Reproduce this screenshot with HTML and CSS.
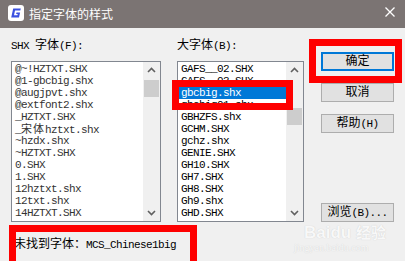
FILE: index.html
```html
<!DOCTYPE html>
<html lang="zh-CN">
  <head>
    <meta charset="UTF-8">
    <title>指定字体的样式</title>
    <link rel="stylesheet" href="styles.css">
  </head>
  <body>
    <div class="dialog">
      <div class="titlebar">
        <svg class="app-icon" width="16" height="16" viewBox="0 0 16 16">
          <rect x="0" y="0" width="16" height="16" rx="3" fill="#fff"/>
          <path d="M5.2 3.5 H12.8 L12.3 5.6 H7 L6 10.2 H9.4 L9.7 9 H8.1 L8.5 7.4 H12.1 L11 12.4 H3.2 Z" fill="#3b50e0"/>
        </svg>
        <span class="title">指定字体的样式</span>
        <svg class="close" width="10" height="10" viewBox="0 0 10 10">
          <path d="M0.5 0.5 L9.5 9.5 M9.5 0.5 L0.5 9.5" stroke="#fff" stroke-width="1.3"/>
        </svg>
      </div>

      <div class="content">
        <div class="col col-shx">
          <div class="label">SHX <span class="cjk">字体</span>(F):</div>
          <div class="listbox dim">
            <ul class="items">
              <li>@~!HZTXT.SHX</li>
              <li>@1-gbcbig.shx</li>
              <li>@augjpvt.shx</li>
              <li>@extfont2.shx</li>
              <li>_HZTXT.SHX</li>
              <li>_<span class="cjk">宋体</span>hztxt.shx</li>
              <li>~hzdx.shx</li>
              <li>~HZTXT.SHX</li>
              <li>0.SHX</li>
              <li>1.SHX</li>
              <li>12hztxt.shx</li>
              <li>12txt.shx</li>
              <li>14HZTXT.SHX</li>
            </ul>
            <div class="scrollbar">
              <svg class="arrow" width="17" height="17" viewBox="0 0 17 17"><path d="M5 10 L8.5 6.5 L12 10" fill="none" stroke="#606060" stroke-width="1.6"/></svg>
              <div class="thumb thumb-top"></div>
              <svg class="arrow arrow-down" width="17" height="17" viewBox="0 0 17 17"><path d="M5 7 L8.5 10.5 L12 7" fill="none" stroke="#606060" stroke-width="1.6"/></svg>
            </div>
          </div>
        </div>

        <div class="col col-big">
          <div class="label"><span class="cjk">大字体</span>(B):</div>
          <div class="listbox">
            <ul class="items">
              <li>GAFS__02.SHX</li>
              <li>GAFS__03.SHX</li>
              <li class="selected">gbcbig.shx</li>
              <li>gbcbig01.shx</li>
              <li>GBHZFS.shx</li>
              <li>GCHM.SHX</li>
              <li>gchz.shx</li>
              <li>GENIE.SHX</li>
              <li>GH10.SHX</li>
              <li>GH7.SHX</li>
              <li>GH8.SHX</li>
              <li>Gh9.shx</li>
              <li>GHD.SHX</li>
            </ul>
            <div class="scrollbar">
              <svg class="arrow" width="17" height="17" viewBox="0 0 17 17"><path d="M5 10 L8.5 6.5 L12 10" fill="none" stroke="#606060" stroke-width="1.6"/></svg>
              <div class="thumb thumb-mid"></div>
              <svg class="arrow arrow-down" width="17" height="17" viewBox="0 0 17 17"><path d="M5 7 L8.5 10.5 L12 7" fill="none" stroke="#606060" stroke-width="1.6"/></svg>
            </div>
          </div>
        </div>

        <div class="col col-buttons">
          <button class="btn btn-default"><span class="cjk">确定</span></button>
          <button class="btn"><span class="cjk">取消</span></button>
          <button class="btn"><span class="cjk">帮助</span>(H)</button>
          <button class="btn btn-browse"><span class="cjk">浏览</span>(B)...</button>
        </div>
      </div>

      <div class="status"><span class="cjk">未找到字体：</span>MCS_Chinese1big</div>

      <div class="mark mark-ok"></div>
      <div class="mark mark-sel"></div>
      <div class="mark mark-status"></div>

      <div class="watermark">
        <div class="wm-logo">Baidu <span class="cjk">经验</span></div>
        <div class="wm-url">jingyan.baidu.com</div>
      </div>
    </div>
  </body>
</html>
```

FILE: styles.css
```css
body {
  margin: 0;
  background-color: #f0f0f0;
  font-family: "Liberation Mono", "Noto Sans CJK SC", monospace;
  font-size: 11px;
  letter-spacing: -0.6px;
  color: #000;
}

.cjk {
  font-family: "Noto Sans CJK SC", sans-serif;
  font-size: 12px;
  letter-spacing: 0;
  line-height: 12px;
}

.dialog {
  position: relative;
  width: 405px;
  height: 261px;
  overflow: hidden;
}

/* title bar */
.titlebar {
  height: 28px;
  background-color: #7b7473;
  display: flex;
  align-items: center;
  padding-left: 8px;
  color: #fff;
}

.app-icon {
  margin-top: -3px;
}

.title {
  margin-left: 5px;
  margin-top: -2px;
  font-family: "Noto Sans CJK SC", sans-serif;
  font-size: 12px;
  letter-spacing: 0;
}

.close {
  margin-left: auto;
  margin-right: 10px;
  margin-top: -4px;
}

/* main area */
.content {
  display: flex;
  padding: 10px 0 0 11px;
}

.col-shx {
  width: 150px;
}

.col-big {
  width: 127px;
  margin-left: 16px;
}

.col-buttons {
  width: 73px;
  margin-left: 17px;
  padding-top: 14px;
  display: flex;
  flex-direction: column;
  gap: 12px;
}

.label {
  height: 14px;
  line-height: 14px;
  margin-bottom: 9px;
  color: #000;
}

.listbox {
  box-sizing: border-box;
  height: 161px;
  border: 1px solid #828790;
  background-color: #fff;
  display: flex;
}

.items {
  list-style: none;
  margin: 0;
  padding: 1px 0 0 0;
  flex: 1;
  overflow: hidden;
}

.items li {
  height: 12px;
  line-height: 12px;
  padding-left: 3px;
  white-space: nowrap;
}

.items .cjk {
  font-size: 11px;
  letter-spacing: 1px;
  line-height: 11px;
}

.dim .items li {
  color: #333;
}

.items li.selected {
  background-color: #0078d7;
  color: #fff;
}

.scrollbar {
  width: 17px;
  background-color: #f0f0f0;
  display: flex;
  flex-direction: column;
}

.arrow {
  display: block;
}

.arrow-down {
  margin-top: auto;
}

.thumb {
  width: 15px;
  height: 17px;
  margin-left: 1px;
  background-color: #cdcdcd;
}

.thumb-top {
  margin-top: 1px;
}

.thumb-mid {
  margin-top: 29px;
}

/* buttons */
.btn {
  box-sizing: border-box;
  width: 73px;
  height: 19px;
  padding: 0;
  border: 1px solid #adadad;
  background-color: #e1e1e1;
  font-family: "Liberation Mono", "Noto Sans CJK SC", monospace;
  font-size: 11px;
  letter-spacing: -0.6px;
  line-height: 15px;
  color: #000;
}

.btn-default {
  border: 2px solid #0078d7;
}

.btn-browse {
  margin-top: 58px;
}

/* status line */
.status {
  margin-top: 15px;
  padding-left: 14px;
  height: 14px;
  line-height: 14px;
  white-space: nowrap;
}

/* red annotation boxes drawn over the dialog */
.mark {
  position: absolute;
  box-sizing: border-box;
  border: 7px solid #fe0000;
}

.mark-ok {
  left: 309px;
  top: 39px;
  width: 93px;
  height: 44px;
}

.mark-sel {
  left: 172px;
  top: 80px;
  width: 121px;
  height: 30px;
}

.mark-status {
  left: 9px;
  top: 225px;
  width: 188px;
  height: 46px;
}

/* faint watermark */
.watermark {
  position: absolute;
  left: 304px;
  top: 223px;
  color: #f8f8f8;
  text-shadow: 0 0 1px #c8c8c8;
  letter-spacing: 0;
  font-family: "Liberation Sans", sans-serif;
  white-space: nowrap;
}

.wm-logo {
  font-size: 17px;
  font-weight: bold;
  line-height: 18px;
}

.wm-logo .cjk {
  font-size: 15px;
  line-height: 18px;
}

.wm-url {
  font-family: "Liberation Serif", serif;
  font-size: 10px;
  line-height: 12px;
  margin-left: -10px;
}
```
